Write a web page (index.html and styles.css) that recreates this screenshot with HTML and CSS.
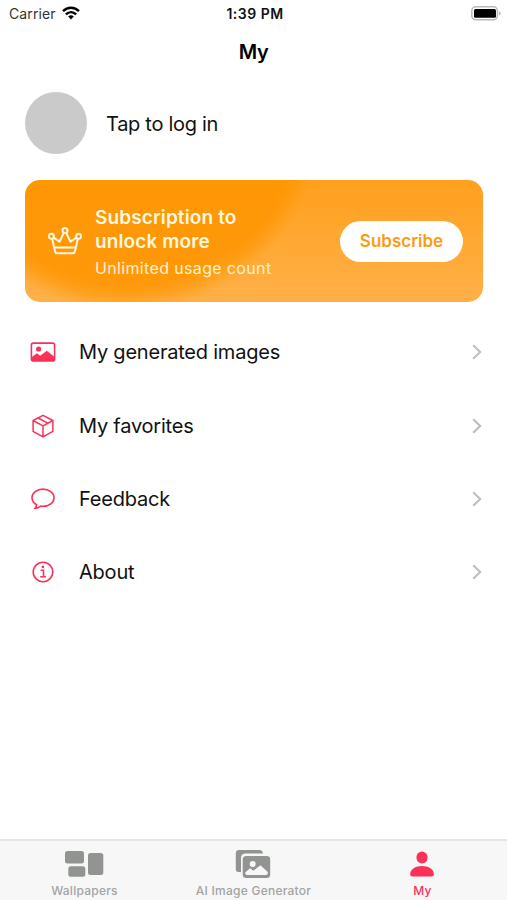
FILE: index.html
```
<!DOCTYPE html>
<html lang="en">
<head>
<meta charset="UTF-8">
<meta name="viewport" content="width=device-width, initial-scale=1">
<title>My</title>
<link rel="stylesheet" href="styles.css">
</head>
<body>
<div class="status">
  <div class="carrier">
    <span>Carrier</span>
    <svg width="18" height="14" viewBox="0 0 18 14" fill="none" stroke="#000" stroke-width="2.5">
      <path d="M1 5.2C5.6.6 12.4.6 17 5.2"/>
      <path d="M3.9 8.3c3-2.9 7.2-2.9 10.2 0"/>
      <path d="M6.2 10.6a4 4 0 0 1 5.6 0L9 13.6z" fill="#000" stroke="none"/>
    </svg>
  </div>
  <div class="time">1:39 PM</div>
  <svg class="battery" width="31" height="15" viewBox="0 0 31 15">
    <rect x="1.8" y=".8" width="25.6" height="13" rx="4" fill="#fff" stroke="#b9b9b9" stroke-width="1.5"/>
    <rect x="4" y="3" width="22" height="8.8" rx="1.5"/>
    <path d="M28.9 5.2q1.8.7 1.8 2.1t-1.8 2.1z" fill="#b9b9b9"/>
  </svg>
</div>
<h1>My</h1>

<div class="profile">
  <div class="avatar"></div>
  <span>Tap to log in</span>
</div>

<section class="banner">
  <svg class="crown" width="34" height="28" viewBox="0 0 34 28" fill="none" stroke="#fff7df" stroke-width="2" stroke-linejoin="round">
    <circle cx="17" cy="3.5" r="2.5"/>
    <circle cx="3.4" cy="9.3" r="2.5"/>
    <circle cx="30.6" cy="9.3" r="2.5"/>
    <path d="M4.2 11.7 7 24.3q.4 1.9 2.2 1.9h15.6q1.8 0 2.2-1.9l2.8-12.6M5.6 10.7l5.9 4 4.3-8.8M18.2 5.9l4.3 8.8 5.9-4M6.5 20.5h21"/>
  </svg>
  <div class="offer">
    <h2>Subscription to<br>unlock more</h2>
    <p>Unlimited usage count</p>
  </div>
  <button>Subscribe</button>
</section>

<ul class="menu">
  <li>
    <svg class="icon" width="26" height="26" viewBox="0 0 26 26" fill="none" stroke="#fb3159" stroke-width="1.6">
      <rect x="1.4" y="4.1" width="23.2" height="17.8" rx="2"/>
      <circle cx="8.6" cy="10" r="2.6" fill="#fb3159" stroke="none"/>
      <path d="M1.5 18.2 7 14.2l3.2 2.5 6.6-5 7.8 6.3v2.5q0 1.3-1.5 1.3H3q-1.5 0-1.5-1.3z" fill="#fb3159" stroke="none"/>
    </svg>
    <span>My generated images</span>
    <svg class="arrow" width="10" height="16" viewBox="0 0 10 16"><path d="m1.2 1.3 7 6.7-7 6.7"/></svg>
  </li>
  <li>
    <svg class="icon" width="26" height="26" viewBox="0 0 26 26" fill="none" stroke="#fb3159" stroke-width="1.5" stroke-linejoin="round">
      <path d="M13 2.4 22.9 7.5v10.8L13 23.8 3.1 18.3V7.5zM3.1 7.5 13 12.8l9.9-5.3M13 12.8v11M8 5l9.9 5.2"/>
    </svg>
    <span>My favorites</span>
    <svg class="arrow" width="10" height="16" viewBox="0 0 10 16"><path d="m1.2 1.3 7 6.7-7 6.7"/></svg>
  </li>
  <li>
    <svg class="icon" width="26" height="26" viewBox="0 0 26 26" fill="none" stroke="#fb3159" stroke-width="1.6" stroke-linejoin="round">
      <path d="M6.6 18.7C3.7 17.1 2 14.6 2 11.7 2 6.9 6.8 3.1 13 3.1s11 3.8 11 8.6-4.8 8.6-11 8.6q-1.2 0-2.2-.2c-1.8 1.4-3.8 2.2-6 2.4 1.2-1.2 1.9-2.4 1.8-3.8z"/>
    </svg>
    <span>Feedback</span>
    <svg class="arrow" width="10" height="16" viewBox="0 0 10 16"><path d="m1.2 1.3 7 6.7-7 6.7"/></svg>
  </li>
  <li>
    <svg class="icon" width="26" height="26" viewBox="0 0 26 26" fill="none" stroke="#fb3159" stroke-width="1.6">
      <circle cx="13" cy="13" r="9.8"/>
      <path d="M10.6 11.3h2.9v6.3M10.2 17.8h5.7"/>
      <circle cx="12.9" cy="7.9" r="1.3" fill="#fb3159" stroke="none"/>
    </svg>
    <span>About</span>
    <svg class="arrow" width="10" height="16" viewBox="0 0 10 16"><path d="m1.2 1.3 7 6.7-7 6.7"/></svg>
  </li>
</ul>

<nav class="tabs">
  <a class="tab">
    <svg width="40" height="30" viewBox="0 0 40 30" fill="#919491">
      <rect x="1" y="2" width="19" height="12.5" rx="2.5"/>
      <rect x="4.3" y="17.2" width="17" height="10.5" rx="2.5"/>
      <rect x="24" y="4" width="15.3" height="22" rx="2.5"/>
    </svg>
    <span>Wallpapers</span>
  </a>
  <a class="tab">
    <svg width="36" height="30" viewBox="0 0 36 30">
      <path d="M.8 20.8V4.3Q.8.9 4.2.9h20.5q2.8 0 3.4 3.5H10.5Q6 4.4 6 8.9v14.4Q.8 23.3.8 20.8z" fill="#919491"/>
      <rect x="7.7" y="7" width="27.5" height="22" rx="3.5" fill="#919491"/>
      <circle cx="17.7" cy="14.9" r="3" fill="#f7f7f7"/>
      <path d="m10.2 23.5 4.8-4.2 3.4 2.5 7-5.6 7.4 6.7v1.2q0 2-2 2H12.2q-2 0-2-2z" fill="#f7f7f7"/>
    </svg>
    <span>AI Image Generator</span>
  </a>
  <a class="tab active">
    <svg width="26" height="30" viewBox="0 0 26 30" fill="#fc3158">
      <ellipse cx="13" cy="8.5" rx="5.6" ry="6.1"/>
      <path d="M1.2 25.3C1.2 20.2 6.4 17 13 17s11.8 3.2 11.8 8.3q0 2.3-2.2 2.3H3.4q-2.2 0-2.2-2.3z"/>
    </svg>
    <span>My</span>
  </a>
</nav>
</body>
</html>
```
FILE: styles.css
```
*{box-sizing:border-box;}
body{margin:0;height:900px;display:flex;flex-direction:column;overflow:hidden;background:#fff;color:#111;font-family:Inter,"Liberation Sans",sans-serif;}
h1,h2,p,ul{margin:0;padding:0;}
svg{display:block;flex:none;}
span,h1,h2,p,button{white-space:nowrap;}

.status{height:27px;padding:0 6px 0 9px;display:grid;grid-template-columns:1fr auto 1fr;align-items:center;font-size:14px;}
.carrier{display:flex;align-items:center;gap:6px;color:#333;letter-spacing:.1px;}
.carrier svg{margin-top:-2px;}
.time{font-weight:600;color:#111;letter-spacing:.5px;}
.battery{justify-self:end;}
h1{height:50px;line-height:51px;text-align:center;font-size:20px;font-weight:600;letter-spacing:-.4px;color:#000;}

.profile{margin:15px 25px 0;height:62px;display:flex;align-items:center;gap:19px;font-size:20px;letter-spacing:-.3px;}
.profile span{margin-top:2px;}
.avatar{width:62px;height:62px;border-radius:50%;background:#cacaca;}

.banner{margin:26px 24px 0 25px;height:122px;border-radius:15px;padding:0 20px 0 23px;display:flex;align-items:center;background:radial-gradient(circle at 102px -66px,rgba(255,149,0,.85) 170px,rgba(255,149,0,.65) 180px,rgba(255,149,0,0) 197px),linear-gradient(#ffa01e,#ffb048);}
.offer{margin-left:13px;margin-top:3px;flex:1;color:#fff7df;}
.offer h2{font-size:19px;line-height:24px;font-weight:600;letter-spacing:.12px;}
.offer p{margin-top:2px;font-size:16px;line-height:24px;letter-spacing:.35px;color:#fff0d0;}
.banner button{width:123px;height:41px;border:0;border-radius:21px;padding:0;background:#fff;color:#fb9b14;font:600 17px Inter,sans-serif;}

.menu{margin-top:13.5px;padding:0 25px 0 29.5px;list-style:none;}
.menu li{height:73.4px;display:flex;align-items:center;font-size:20px;letter-spacing:-.22px;}
.menu span{margin-left:23.5px;flex:1;}
.arrow{fill:none;stroke:#bdbdbd;stroke-width:2;}

.tabs{margin-top:auto;height:61px;padding-top:8px;border-top:2px solid #e5e5e5;background:#f7f7f7;display:flex;}
.tab{flex:1;display:flex;flex-direction:column;align-items:center;color:#a3a3a3;font-size:12px;line-height:15px;font-weight:500;letter-spacing:.25px;}
.tab svg{margin-left:-1px;}
.tab span{margin-top:4px;}
.tab.active{color:#fc3158;}
```
